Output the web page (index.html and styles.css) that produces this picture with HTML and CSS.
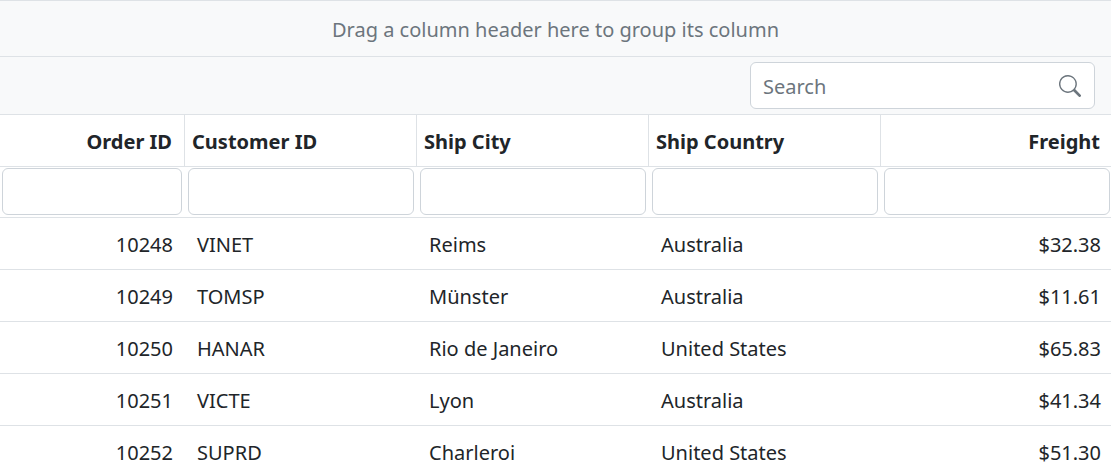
FILE: index.html
```html
<!DOCTYPE html>
<html lang="en">
<head>
<meta charset="utf-8">
<title>Orders</title>
<link rel="stylesheet" href="styles.css">
</head>
<body>
<main class="grid">
  <div class="group-area">Drag a column header here to group its column</div>
  <div class="toolbar">
    <div class="search">
      <input class="search-input" type="text" placeholder="Search" aria-label="Search">
      <button class="search-button" type="button" aria-label="Search">
        <svg class="search-icon" viewBox="0 0 16 16" aria-hidden="true"><path d="M11.742 10.344a6.5 6.5 0 1 0-1.397 1.398h-.001c.03.04.062.078.098.115l3.85 3.85a1 1 0 0 0 1.415-1.414l-3.85-3.85a1.007 1.007 0 0 0-.115-.1zM12 6.5a5.5 5.5 0 1 1-11 0 5.5 5.5 0 0 1 11 0z"/></svg>
      </button>
    </div>
  </div>
  <table class="table">
    <colgroup><col class="col-id"><col class="col-text"><col class="col-text"><col class="col-text"><col></colgroup>
    <thead>
      <tr class="headers"><th class="num" scope="col">Order ID</th><th scope="col">Customer ID</th><th scope="col">Ship City</th><th scope="col">Ship Country</th><th class="num" scope="col">Freight</th></tr>
      <tr class="filters"><td><input class="filter" type="text" aria-label="Filter Order ID"></td><td><input class="filter" type="text" aria-label="Filter Customer ID"></td><td><input class="filter" type="text" aria-label="Filter Ship City"></td><td><input class="filter" type="text" aria-label="Filter Ship Country"></td><td><input class="filter" type="text" aria-label="Filter Freight"></td></tr>
    </thead>
    <tbody>
      <tr><td class="num">10248</td><td>VINET</td><td>Reims</td><td>Australia</td><td class="num">$32.38</td></tr>
      <tr><td class="num">10249</td><td>TOMSP</td><td>Münster</td><td>Australia</td><td class="num">$11.61</td></tr>
      <tr><td class="num">10250</td><td>HANAR</td><td>Rio de Janeiro</td><td>United States</td><td class="num">$65.83</td></tr>
      <tr><td class="num">10251</td><td>VICTE</td><td>Lyon</td><td>Australia</td><td class="num">$41.34</td></tr>
      <tr><td class="num">10252</td><td>SUPRD</td><td>Charleroi</td><td>United States</td><td class="num">$51.30</td></tr>
    </tbody>
  </table>
</main>
</body>
</html>
```
FILE: styles.css
```css
* { box-sizing: border-box; }

body {
  margin: 0;
  overflow: hidden;
  background: #fff;
  color: #212529;
  font-family: "Segoe UI", "Noto Sans", sans-serif;
  font-size: 20px;
  line-height: 30px;
}

.grid { border-top: 1px solid #dee2e6; }

.group-area {
  padding: 14px 16px 11px;
  border-bottom: 1px solid #dee2e6;
  background: #f8f9fa;
  color: #6c757d;
  text-align: center;
}

.toolbar {
  display: flex;
  justify-content: flex-end;
  padding: 5px 16px;
  border-bottom: 1px solid #dee2e6;
  background: #f8f9fa;
}

.search {
  display: flex;
  width: 345px;
  height: 47px;
  border: 1px solid #ced4da;
  border-radius: 6px;
  background: #fff;
}

.search-input {
  flex: 1;
  min-width: 0;
  padding: 2px 12px 0;
  border: 0;
  background: transparent;
  color: #212529;
  font: inherit;
}

.search-input::placeholder { color: #6c757d; opacity: 1; }

.search-button {
  display: flex;
  align-items: center;
  justify-content: center;
  width: 48px;
  padding: 0;
  border: 0;
  background: transparent;
}

.search-icon {
  width: 22px;
  height: 22px;
  fill: #6c757d;
}

.table {
  width: 100%;
  border-collapse: separate;
  border-spacing: 0;
  table-layout: fixed;
}

.col-id { width: 184px; }
.col-text { width: 232px; }

th {
  height: 52px;
  padding: 2px 12px 0 7px;
  border-bottom: 1px solid #dee2e6;
  border-left: 1px solid #dee2e6;
  font-weight: 700;
  text-align: left;
}

th:first-child { border-left: 0; }
th:last-child { padding-right: 11px; }

td {
  height: 52px;
  padding: 2px 11px 0 13px;
  border-bottom: 1px solid #dee2e6;
  text-align: left;
}

td:last-child { padding-right: 10px; }

.num { text-align: right; }

.filters td { height: 51px; padding: 1px 2px 2px 4px; }
.filters td:first-child { padding-left: 2px; }
.filters td:last-child { padding-right: 1px; }

.filter {
  display: block;
  width: 100%;
  height: 47px;
  padding: 0 12px;
  border: 1px solid #ced4da;
  border-radius: 6px;
  background: #fff;
  color: #212529;
  font: inherit;
}
```
